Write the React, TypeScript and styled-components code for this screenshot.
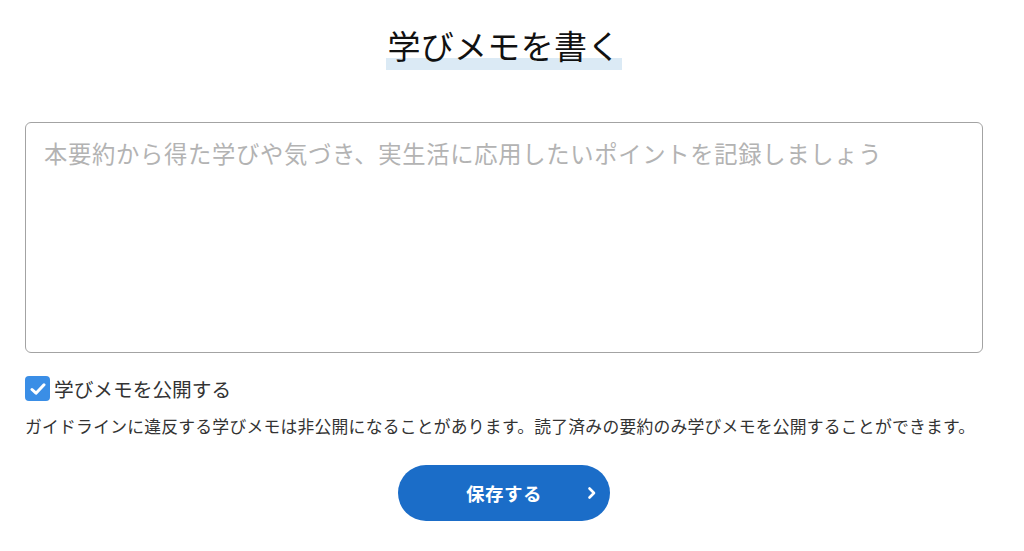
import React, { useState } from 'react'
import styled, { createGlobalStyle } from 'styled-components'

const GlobalStyle = createGlobalStyle`
  body {
    margin: 0;
    background: #ffffff;
    font-family: "Noto Sans CJK JP", "Noto Sans", sans-serif;
    color: #333333;
  }
`

const Page = styled.div`
  width: 958px;
  padding: 24px 0 0 25px;
  display: flex;
  flex-direction: column;
`

const TitleRow = styled.div`
  display: flex;
  justify-content: center;
`

const Title = styled.h2`
  margin: 0;
  display: inline-block;
  font-size: 33px;
  font-weight: 400;
  line-height: 42px;
  letter-spacing: 0.3px;
  padding: 0 1px 4px;
  color: #111111;
  background: linear-gradient(transparent calc(100% - 12px), #dbeaf5 calc(100% - 12px));
`

const MemoArea = styled.textarea`
  margin-top: 52px;
  box-sizing: border-box;
  width: 958px;
  height: 231px;
  padding: 13px 18px;
  border: 1px solid #a3a3a3;
  border-radius: 6px;
  font-family: inherit;
  font-size: 23.3px;
  letter-spacing: 0.7px;
  line-height: 1.5;
  color: #333333;
  resize: none;
  outline: none;
  &::placeholder {
    color: #b3b3b3;
  }
`

const CheckLabel = styled.label`
  margin-top: 21px;
  display: flex;
  align-items: center;
  gap: 4px;
  font-size: 19.7px;
  color: #333333;
  cursor: pointer;
`

const HiddenInput = styled.input`
  display: none;
`

const Box = styled.span<{ checked: boolean }>`
  width: 25px;
  height: 25px;
  border-radius: 4px;
  background: ${({ checked }) => (checked ? '#3a8ee6' : '#ffffff')};
  border: ${({ checked }) => (checked ? 'none' : '1px solid #a3a3a3')};
  display: flex;
  align-items: center;
  justify-content: center;
  flex-shrink: 0;
`

const Note = styled.p`
  margin: 10px 0 0;
  font-size: 16.8px;
  letter-spacing: 0.25px;
  line-height: 1.6;
  color: #333333;
  white-space: nowrap;
`

const ButtonRow = styled.div`
  margin-top: 25px;
  display: flex;
  justify-content: center;
`

const SaveButton = styled.button`
  position: relative;
  width: 212px;
  height: 56px;
  border: none;
  border-radius: 28px;
  background: #1b6dc8;
  color: #ffffff;
  font-family: inherit;
  font-size: 18.5px;
  font-weight: 700;
  letter-spacing: 0.5px;
  cursor: pointer;
`

const Chevron = styled.svg`
  position: absolute;
  right: 12px;
  top: 50%;
  transform: translateY(-50%);
`

export default function App() {
  const [isPublic, setIsPublic] = useState(true)

  return (
    <>
      <GlobalStyle />
      <Page>
        <TitleRow>
          <Title>学びメモを書く</Title>
        </TitleRow>
        <MemoArea placeholder="本要約から得た学びや気づき、実生活に応用したいポイントを記録しましょう" />
        <CheckLabel>
          <HiddenInput type="checkbox" checked={isPublic} onChange={() => setIsPublic(!isPublic)} />
          <Box checked={isPublic}>
            {isPublic && (
              <svg width="16" height="14" viewBox="0 0 16 14">
                <path d="M2 7.5 L6 11.2 L14 2.8" fill="none" stroke="#ffffff" strokeWidth="3" strokeLinecap="round" strokeLinejoin="round" />
              </svg>
            )}
          </Box>
          学びメモを公開する
        </CheckLabel>
        <Note>ガイドラインに違反する学びメモは非公開になることがあります。読了済みの要約のみ学びメモを公開することができます。</Note>
        <ButtonRow>
          <SaveButton>
            保存する
            <Chevron width="12" height="14" viewBox="0 0 12 14">
              <path d="M3.5 2.5 L8 7 L3.5 11.5" fill="none" stroke="#ffffff" strokeWidth="2.6" strokeLinecap="round" strokeLinejoin="round" />
            </Chevron>
          </SaveButton>
        </ButtonRow>
      </Page>
    </>
  )
}
